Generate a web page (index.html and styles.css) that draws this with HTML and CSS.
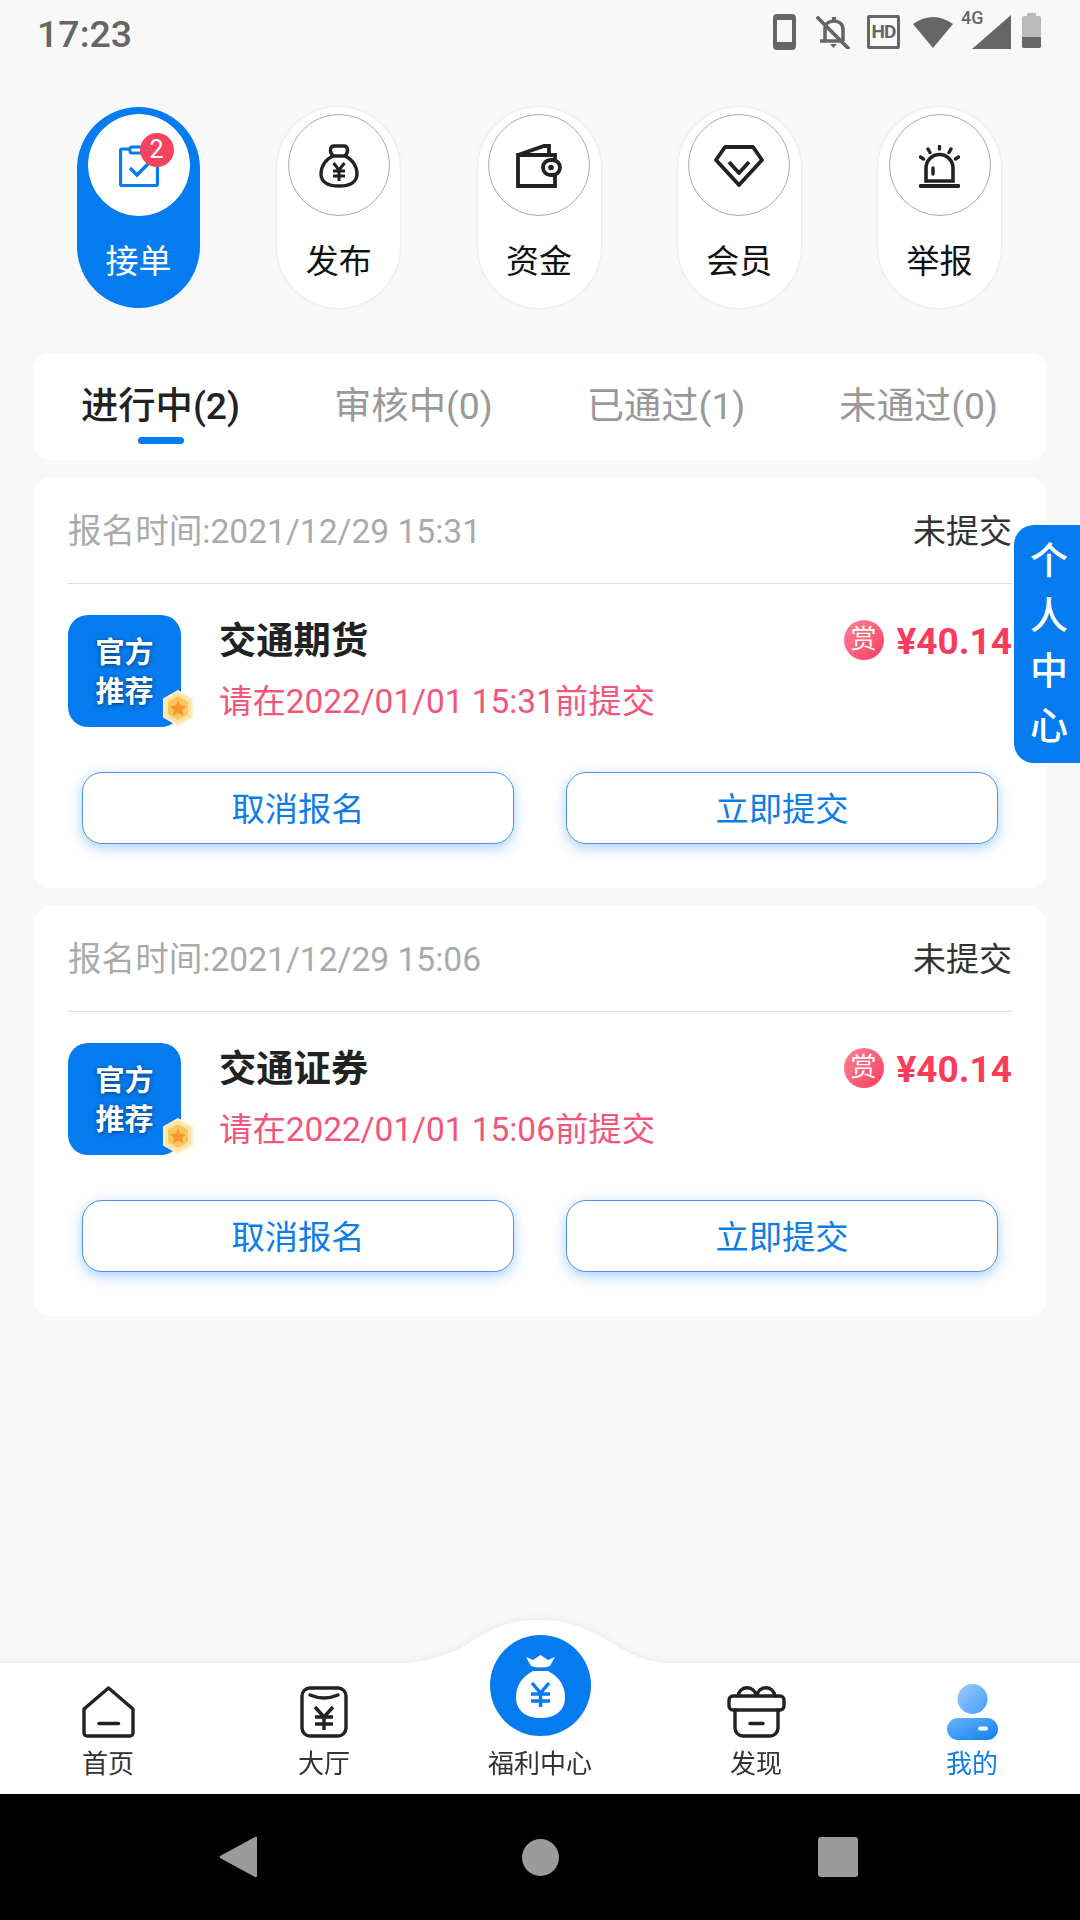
FILE: index.html
```html
<!DOCTYPE html>
<html lang="zh-CN">
<head>
  <meta charset="UTF-8">
  <meta name="viewport" content="width=device-width, initial-scale=1.0">
  <title>接单</title>
  <link rel="stylesheet" href="styles.css">
</head>
<body>
  <!-- status bar -->
  <div class="status-bar">
    <span class="time">17:23</span>
    <div class="status-icons">
      <svg class="st-phone" width="23" height="36" viewBox="0 0 23 36"><rect x="2" y="2" width="19" height="32" rx="2" fill="none" stroke="#666" stroke-width="4"/><rect x="2" y="28" width="19" height="6" fill="#666"/><rect x="2" y="2" width="19" height="4" fill="#666"/></svg>
      <svg class="st-bell" width="34" height="33" viewBox="0 0 34 33"><path d="M9 25V13C9 8 13 5 18 5C23 5 27 8 27 14V25M4 25H28" fill="none" stroke="#666" stroke-width="3.600"/><path d="M14 28H21L17.500 32Z" fill="#666"/><rect x="16" y="1" width="4" height="5" fill="#666"/><path d="M2 2L32 32" stroke="#666" stroke-width="3.800" stroke-linecap="round"/></svg>
      <div class="st-hd">HD</div>
      <svg class="st-wifi" width="40" height="31" viewBox="0 0 40 31"><path d="M0 7Q20 -7 40 7L20 31Z" fill="#666"/></svg>
      <div class="st-signal">
        <svg width="39" height="34" viewBox="0 0 39 34"><path d="M39 0V34H0Z" fill="#666"/></svg>
        <span class="st-4g">4G</span>
      </div>
      <div class="st-battery"><div class="st-battery-low"></div></div>
    </div>
  </div>

  <!-- top menu -->
  <div class="menu">
    <div class="pill active">
      <div class="pill-circle">
        <svg width="40" height="42" viewBox="0 0 40 42"><path d="M11 4H3a1.500 1.500 0 0 0-1.500 1.500V39a1.500 1.500 0 0 0 1.500 1.500H37a1.500 1.500 0 0 0 1.500-1.500V20" fill="none" stroke="#047bef" stroke-width="3.200"/><rect x="11" y="2" width="15" height="6" rx="2" fill="none" stroke="#047bef" stroke-width="3"/><path d="M11 23L18 30L31 17" fill="none" stroke="#047bef" stroke-width="3.400"/></svg>
        <span class="badge">2</span>
      </div>
      <span class="pill-label">接单</span>
    </div>
    <div class="pill">
      <div class="pill-circle">
        <svg width="40" height="44" viewBox="0 0 40 44"><g fill="none" stroke="#222" stroke-width="3.400" stroke-linejoin="round"><path d="M14 12C10 8 11 2 15 2H25C29 2 30 8 26 12"/><path d="M14 12C7 15 2 22 2 30C2 38 9 42 20 42C31 42 38 38 38 30C38 22 33 15 26 12Z"/><path d="M14.500 19L20 26L25.500 19M14 27H26M14 32H26M20 26V37" stroke-width="3"/></g></svg>
      </div>
      <span class="pill-label">发布</span>
    </div>
    <div class="pill">
      <div class="pill-circle">
        <svg width="46" height="44" viewBox="0 0 46 44"><g fill="none" stroke="#222" stroke-width="3.800"><path d="M39 32V42H2V11H39V16"/><path d="M2 11L28 2H33V11"/><rect x="27" y="16" width="17" height="15" rx="7.500"/></g><circle cx="35" cy="23.500" r="2.800" fill="#222"/></svg>
      </div>
      <span class="pill-label">资金</span>
    </div>
    <div class="pill">
      <div class="pill-circle">
        <svg width="50" height="42" viewBox="0 0 50 42"><g fill="none" stroke="#222" stroke-width="3.800" stroke-linejoin="round"><path d="M11 2H39L48 15L25 40L2 15Z"/><path d="M15 17L25 28L35 17"/></g></svg>
      </div>
      <span class="pill-label">会员</span>
    </div>
    <div class="pill">
      <div class="pill-circle">
        <svg width="41" height="43" viewBox="0 0 41 43"><g fill="none" stroke="#222" stroke-linecap="round"><path d="M7 36V23A13.500 13.500 0 0 1 34 23V36Z" stroke-width="3.600"/><path d="M1.500 41H39.500" stroke-width="3.800"/><path d="M14 23V29M20.500 1.500V4M9 4L11 7.500M32 4L30 7.500M1.500 12L4.500 14M39.500 12L36.500 14" stroke-width="3.400"/></g></svg>
      </div>
      <span class="pill-label">举报</span>
    </div>
  </div>

  <!-- status tabs -->
  <div class="tabs">
    <div class="tab active">进行中(2)<span class="tab-line"></span></div>
    <div class="tab">审核中(0)</div>
    <div class="tab">已通过(1)</div>
    <div class="tab">未通过(0)</div>
  </div>

  <!-- order 1 -->
  <div class="card">
    <div class="card-head">
      <span class="card-date">报名时间:2021/12/29 15:31</span>
      <span class="card-state">未提交</span>
    </div>
    <div class="card-body">
      <div class="logo">
        <span>官方<br>推荐</span>
        <svg class="logo-medal" width="32" height="36" viewBox="0 0 32 36"><path d="M16 1L30 9V27L16 35L2 27V9Z" fill="#fde3a5" stroke="#feeecb" stroke-width="2"/><path d="M16 6L26 12V24L16 30L6 24V12Z" fill="#fcc65c"/><path d="M16 10.500L18.400 15.500L24 16.200L20 20L21 25.500L16 22.800L11 25.500L12 20L8 16.200L13.600 15.500Z" fill="#f6962c"/></svg>
      </div>
      <div class="info">
        <div class="info-title">交通期货</div>
        <div class="info-deadline">请在2022/01/01 15:31前提交</div>
      </div>
      <div class="reward">
        <span class="reward-icon">赏</span>
        <span class="reward-price">¥40.14</span>
      </div>
    </div>
    <div class="card-actions">
      <button class="action">取消报名</button>
      <button class="action">立即提交</button>
    </div>
  </div>

  <!-- order 2 -->
  <div class="card">
    <div class="card-head">
      <span class="card-date">报名时间:2021/12/29 15:06</span>
      <span class="card-state">未提交</span>
    </div>
    <div class="card-body">
      <div class="logo">
        <span>官方<br>推荐</span>
        <svg class="logo-medal" width="32" height="36" viewBox="0 0 32 36"><path d="M16 1L30 9V27L16 35L2 27V9Z" fill="#fde3a5" stroke="#feeecb" stroke-width="2"/><path d="M16 6L26 12V24L16 30L6 24V12Z" fill="#fcc65c"/><path d="M16 10.500L18.400 15.500L24 16.200L20 20L21 25.500L16 22.800L11 25.500L12 20L8 16.200L13.600 15.500Z" fill="#f6962c"/></svg>
      </div>
      <div class="info">
        <div class="info-title">交通证券</div>
        <div class="info-deadline">请在2022/01/01 15:06前提交</div>
      </div>
      <div class="reward">
        <span class="reward-icon">赏</span>
        <span class="reward-price">¥40.14</span>
      </div>
    </div>
    <div class="card-actions">
      <button class="action">取消报名</button>
      <button class="action">立即提交</button>
    </div>
  </div>

  <div class="side-tab"><span>个</span><span>人</span><span>中</span><span>心</span></div>

  <!-- bottom tab bar -->
  <div class="tabbar">
    <svg class="tabbar-bump" width="290" height="44" viewBox="0 0 290 44"><path d="M0 44C40 43 65 33 84 20C110 4 125 0 150 0C175 0 195 6 225 25C245 37 260 43 290 44Z" fill="#fff"/></svg>
    <div class="tabbar-item">
      <div class="tabbar-icon">
        <svg width="53" height="52" viewBox="0 0 53 52"><g fill="none" stroke="#222" stroke-width="3.400" stroke-linejoin="round" stroke-linecap="round"><path d="M26.500 2L51 23V47A3 3 0 0 1 48 50H5A3 3 0 0 1 2 47V23Z"/><path d="M17 37.500H36.500"/></g></svg>
      </div>
      <span>首页</span>
    </div>
    <div class="tabbar-item">
      <div class="tabbar-icon">
        <svg width="48" height="52" viewBox="0 0 48 52"><g fill="none" stroke="#222" stroke-width="3.400" stroke-linecap="round"><rect x="2" y="2" width="44" height="48" rx="8"/><path d="M10 9Q24 15 38 9"/><path d="M15 21L24 31L33 21M15 31H33M15 38H33M24 31V44" stroke-linecap="butt"/></g></svg>
      </div>
      <span>大厅</span>
    </div>
    <div class="tabbar-item">
      <div class="tabbar-center">
        <svg width="101" height="101" viewBox="0 0 101 101"><circle cx="50.500" cy="50.500" r="50.500" fill="#047bef"/><path d="M36 22L43 25L50.500 20L58 25L65 22L60 31Q50.500 34 41 31Z" fill="#fff"/><path d="M43 36C31 42 26 52 26 62C26 76 36 83 50.500 83C65 83 75 76 75 62C75 52 70 42 58 36Z" fill="#fff"/><path d="M42 48L50.500 58L59 48M41 59H60M41 66H60M50.500 58V72" fill="none" stroke="#047bef" stroke-width="3.400"/></svg>
      </div>
      <span>福利中心</span>
    </div>
    <div class="tabbar-item">
      <div class="tabbar-icon">
        <svg width="59" height="53" viewBox="0 0 59 53"><g fill="none" stroke="#222" stroke-width="3.400" stroke-linecap="round"><path d="M11 11C13 0 27 0 29.500 11C32 0 46 0 48 11"/><rect x="2" y="11" width="55" height="14" rx="4"/><path d="M8 25V43A8 8 0 0 0 16 51H43A8 8 0 0 0 51 43V25"/><path d="M23 38.500H36"/></g></svg>
      </div>
      <span>发现</span>
    </div>
    <div class="tabbar-item current">
      <div class="tabbar-icon">
        <svg width="51" height="56" viewBox="0 0 51 56">
          <defs>
            <linearGradient id="me-head" x1="0" y1="0" x2="1" y2="1"><stop offset="0" stop-color="#9accfc"/><stop offset="1" stop-color="#469cf7"/></linearGradient>
            <linearGradient id="me-body" x1="0" y1="0" x2="1" y2="1"><stop offset="0" stop-color="#6cb4fa"/><stop offset="1" stop-color="#0a7ff0"/></linearGradient>
          </defs>
          <circle cx="25.500" cy="15" r="15" fill="url(#me-head)"/>
          <rect x="0" y="34" width="51" height="22" rx="11" fill="url(#me-body)"/>
          <rect x="31" y="42.500" width="10" height="4" rx="2" fill="#fff"/>
        </svg>
      </div>
      <span>我的</span>
    </div>
  </div>

  <!-- android nav bar -->
  <div class="navbar">
    <svg class="nav-back" width="38" height="42" viewBox="0 0 38 42"><path d="M36 1L1 20Q0 21 1 22L36 41Q38 42 38 40V2Q38 0 36 1Z" fill="#9b9b9b"/></svg>
    <div class="nav-home"></div>
    <div class="nav-recent"></div>
  </div>
</body>
</html>
```

FILE: styles.css
```css
* {
  box-sizing: border-box;
}
body {
  position: relative;
  display: flex;
  flex-direction: column;
  width: 1080px;
  height: 1920px;
  margin: 0;
  overflow: hidden;
  background-color: #f8f8f8;
  font-family: Roboto, "Noto Sans CJK SC", sans-serif;
  color: #222;
}

/* status bar */
.status-bar {
  display: flex;
  align-items: center;
  justify-content: space-between;
  height: 64px;
  padding: 0 39px 0 37px;
}
.time {
  padding-top: 3px;
  font-size: 37.5px;
  font-weight: 500;
  color: #666;
}
.status-icons {
  display: flex;
  align-items: center;
}
.st-bell {
  margin-left: 20px;
}
.st-hd {
  width: 33px;
  height: 34px;
  margin-left: 17px;
  border: 3px solid #666;
  border-radius: 2px;
  font-size: 19px;
  font-weight: 700;
  line-height: 28px;
  letter-spacing: -1px;
  text-align: center;
  color: #666;
}
.st-wifi {
  margin-left: 13px;
}
.st-signal {
  position: relative;
  display: flex;
  width: 39px;
  margin-left: 19px;
}
.st-4g {
  position: absolute;
  left: -11px;
  top: -7px;
  font-size: 18px;
  font-weight: 500;
  line-height: 20px;
  color: #666;
}
.st-battery {
  position: relative;
  display: flex;
  align-items: flex-end;
  width: 19px;
  height: 32px;
  margin-left: 11px;
  border-radius: 2px;
  background-color: #bbb;
}
.st-battery::before {
  content: "";
  position: absolute;
  left: 5px;
  top: -3px;
  width: 9px;
  height: 3px;
  background-color: #bbb;
}
.st-battery-low {
  width: 100%;
  height: 11px;
  border-radius: 0 0 2px 2px;
  background-color: #666;
}

/* top menu */
.menu {
  display: flex;
  justify-content: space-between;
  margin-top: 43px;
  padding: 0 79px 0 77px;
}
.pill {
  display: flex;
  flex-direction: column;
  align-items: center;
  width: 123px;
  height: 201px;
  padding-top: 7px;
  border-radius: 62px;
  background-color: #fff;
  box-shadow: 0 0 3px rgba(0, 0, 0, 0.12);
}
.pill.active {
  background-color: #047bef;
  box-shadow: none;
}
.pill-circle {
  position: relative;
  display: flex;
  align-items: center;
  justify-content: center;
  width: 102px;
  height: 102px;
  padding-top: 2px;
  border: 1px solid #aaa;
  border-radius: 50%;
  background-color: #fff;
}
.pill.active .pill-circle {
  border-color: #fff;
}
.badge {
  position: absolute;
  left: 51px;
  top: 18px;
  width: 34px;
  height: 34px;
  border-radius: 50%;
  background-color: #f8435f;
  font-size: 25px;
  line-height: 34px;
  text-align: center;
  color: #fff;
}
.pill-label {
  margin-top: 23px;
  font-size: 33px;
  line-height: 46px;
  color: #111;
}
.pill.active .pill-label {
  color: #fff;
}

/* status tabs */
.tabs {
  display: flex;
  align-items: flex-start;
  justify-content: space-between;
  height: 107px;
  margin: 45px 34px 0;
  padding: 28px 48px 0 47px;
  border-radius: 16px;
  background-color: #fff;
}
.tab {
  display: flex;
  flex-direction: column;
  align-items: center;
  font-size: 37.3px;
  line-height: 50px;
  white-space: nowrap;
  color: #999;
}
.tab.active {
  font-weight: 500;
  color: #222;
}
.tab-line {
  width: 46px;
  height: 7px;
  margin-top: 6px;
  border-radius: 4px;
  background-color: #047bef;
}

/* order card */
.card {
  height: 410px;
  margin: 18px 34px 0;
  padding: 0 34px;
  border-radius: 16px;
  background-color: #fff;
}
.card-head {
  display: flex;
  align-items: center;
  justify-content: space-between;
  height: 106px;
  padding-bottom: 4px;
  border-bottom: 1px solid #ddd;
}
.card-date {
  font-size: 33.6px;
  color: #aaa;
}
.card-state {
  font-size: 33px;
  color: #333;
}
.card-body {
  display: flex;
  margin-top: 31px;
}
.logo {
  position: relative;
  display: flex;
  align-items: center;
  justify-content: center;
  width: 113px;
  height: 112px;
  padding-top: 4px;
  border-radius: 20px;
  background-color: #047bef;
  font-size: 29px;
  font-weight: 700;
  line-height: 39px;
  text-align: center;
  text-shadow: 0 1px 4px rgba(0, 0, 0, 0.5);
  color: #fff;
}
.logo-medal {
  position: absolute;
  left: 94px;
  top: 75px;
}
.info {
  flex: 1;
  margin-left: 38px;
}
.info-title {
  padding-top: 2px;
  font-size: 37.3px;
  font-weight: 700;
  line-height: 48px;
  color: #222;
}
.info-deadline {
  margin-top: 13px;
  font-size: 33.4px;
  line-height: 48px;
  color: #f2557a;
}
.reward {
  display: flex;
  align-items: center;
  align-self: flex-start;
  height: 48px;
  margin-top: 2px;
}
.reward-icon {
  width: 40px;
  height: 40px;
  margin-bottom: 2px;
  border-radius: 50%;
  background: linear-gradient(135deg, #ff8297, #f8405f);
  font-size: 26px;
  line-height: 38px;
  text-align: center;
  color: #fff;
}
.reward-price {
  margin-left: 13px;
  font-size: 37px;
  font-weight: 700;
  color: #f93c5c;
}
.card-actions {
  display: flex;
  justify-content: space-between;
  margin-top: 45px;
  padding: 0 14px;
}
.action {
  width: 432px;
  height: 72px;
  padding: 0 0 3px;
  border: 1px solid #4f92e6;
  border-radius: 20px;
  background-color: #fff;
  box-shadow: 0 4px 14px rgba(4, 123, 239, 0.35);
  font-family: inherit;
  font-size: 33.3px;
  color: #0f7de6;
}

/* floating side tab */
.side-tab {
  position: absolute;
  right: 0;
  top: 525px;
  display: flex;
  flex-direction: column;
  align-items: center;
  justify-content: center;
  width: 66px;
  height: 238px;
  padding-left: 4px;
  border-radius: 20px 0 0 20px;
  background-color: #047bef;
  font-size: 38px;
  font-weight: 500;
  line-height: 55px;
  color: #fff;
}

/* bottom tab bar */
.tabbar {
  position: absolute;
  left: 0;
  right: 0;
  top: 1663px;
  display: grid;
  grid-template-columns: repeat(5, 216px);
  grid-template-rows: 118px;
  height: 131px;
  padding-bottom: 13px;
  background-color: #fff;
  filter: drop-shadow(0 -2px 3px rgba(0, 0, 0, 0.05));
}
.tabbar-bump {
  position: absolute;
  left: 390px;
  top: -43px;
}
.tabbar-item {
  position: relative;
  display: flex;
  flex-direction: column;
  align-items: center;
  justify-content: flex-end;
  font-size: 26px;
  line-height: 34px;
  color: #333;
}
.tabbar-item.current {
  color: #0f7de6;
}
.tabbar-icon {
  display: flex;
  align-items: flex-end;
  height: 56px;
  margin-bottom: 9px;
}
.tabbar-item.current .tabbar-icon {
  margin-bottom: 7px;
}
.tabbar-center {
  display: flex;
  margin-bottom: 11px;
}

/* android nav bar */
.navbar {
  position: absolute;
  left: 0;
  right: 0;
  top: 1794px;
  display: flex;
  align-items: center;
  height: 126px;
  padding-left: 219px;
  background-color: #000;
}
.nav-home {
  width: 37px;
  height: 37px;
  margin: 0 259px 0 265px;
  border-radius: 50%;
  background-color: #9b9b9b;
}
.nav-recent {
  width: 40px;
  height: 40px;
  border-radius: 3px;
  background-color: #9b9b9b;
}
```
